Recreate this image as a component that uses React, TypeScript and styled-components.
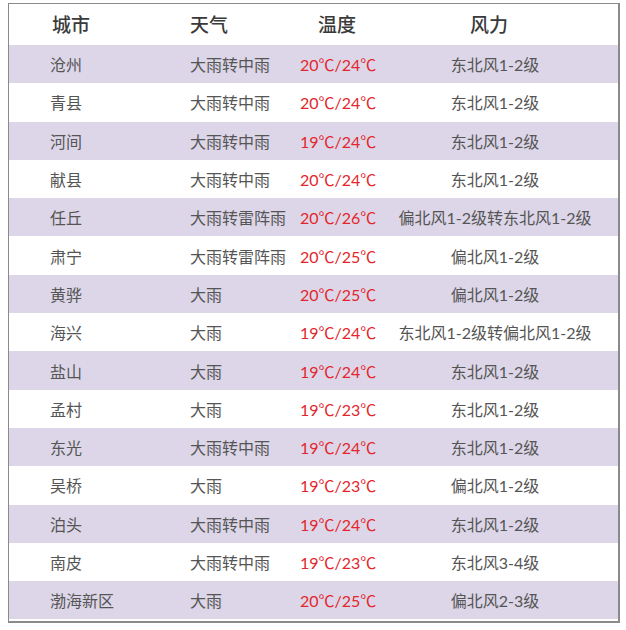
import styled, { createGlobalStyle } from "styled-components";

const GlobalStyle = createGlobalStyle`
  body {
    margin: 0;
    background: #ffffff;
    font-family: Lato, "Noto Sans CJK SC", sans-serif;
  }
`;

const rows = [
  ["沧州", "大雨转中雨", "20℃/24℃", "东北风1-2级"],
  ["青县", "大雨转中雨", "20℃/24℃", "东北风1-2级"],
  ["河间", "大雨转中雨", "19℃/24℃", "东北风1-2级"],
  ["献县", "大雨转中雨", "20℃/24℃", "东北风1-2级"],
  ["任丘", "大雨转雷阵雨", "20℃/26℃", "偏北风1-2级转东北风1-2级"],
  ["肃宁", "大雨转雷阵雨", "20℃/25℃", "偏北风1-2级"],
  ["黄骅", "大雨", "20℃/25℃", "偏北风1-2级"],
  ["海兴", "大雨", "19℃/24℃", "东北风1-2级转偏北风1-2级"],
  ["盐山", "大雨", "19℃/24℃", "东北风1-2级"],
  ["孟村", "大雨", "19℃/23℃", "东北风1-2级"],
  ["东光", "大雨转中雨", "19℃/24℃", "东北风1-2级"],
  ["吴桥", "大雨", "19℃/23℃", "偏北风1-2级"],
  ["泊头", "大雨转中雨", "19℃/24℃", "东北风1-2级"],
  ["南皮", "大雨转中雨", "19℃/23℃", "东北风3-4级"],
  ["渤海新区", "大雨", "20℃/25℃", "偏北风2-3级"],
];

export default function App() {
  return (
    <>
      <GlobalStyle />
      <Frame>
        <HeadRow>
          <HeadCell>城市</HeadCell>
          <HeadCell $shift={-3}>天气</HeadCell>
          <HeadCell $shift={18}>温度</HeadCell>
          <HeadCell $center $shift={-12}>风力</HeadCell>
        </HeadRow>
        {rows.map(([city, weather, temp, wind], i) => (
          <Row key={city} $striped={i % 2 === 0}>
            <Cell>{city}</Cell>
            <Cell>{weather}</Cell>
            <Temp>{temp}</Temp>
            <Wind>{wind}</Wind>
          </Row>
        ))}
      </Frame>
    </>
  );
}

const Frame = styled.div`
  box-sizing: border-box;
  width: 612px;
  margin: 3px 0 0 8px;
  border: 1.5px solid #8a8a8a;
  border-right-width: 2px;
  border-bottom-width: 2px;
  padding-bottom: 2px;
  background: #ffffff;
`;

const grid = `
  display: grid;
  grid-template-columns: 140px 110px 96px 1fr;
  padding: 0 24px 0 41px;
  align-items: center;
`;

const HeadRow = styled.div`
  ${grid}
  height: 41px;
`;

const HeadCell = styled.div<{ $shift?: number; $center?: boolean }>`
  font-family: "Noto Sans CJK SC", sans-serif;
  font-size: 19px;
  font-weight: 500;
  color: #3a3a3a;
  text-align: ${(p) => (p.$center ? "center" : "left")};
  padding-left: ${(p) => (p.$center ? 0 : p.$shift ?? 2)}px;
  margin-left: ${(p) => (p.$center ? p.$shift ?? 0 : 0)}px;
  margin-top: -2px;
`;

const Row = styled.div<{ $striped: boolean }>`
  ${grid}
  height: 38.3px;
  background: ${(p) => (p.$striped ? "#dcd6e8" : "#ffffff")};
`;

const Cell = styled.div`
  font-size: 16px;
  color: #555555;
  white-space: nowrap;
`;

const Temp = styled(Cell)`
  color: #e3262c;
`;

const Wind = styled(Cell)`
  text-align: center;
`;
